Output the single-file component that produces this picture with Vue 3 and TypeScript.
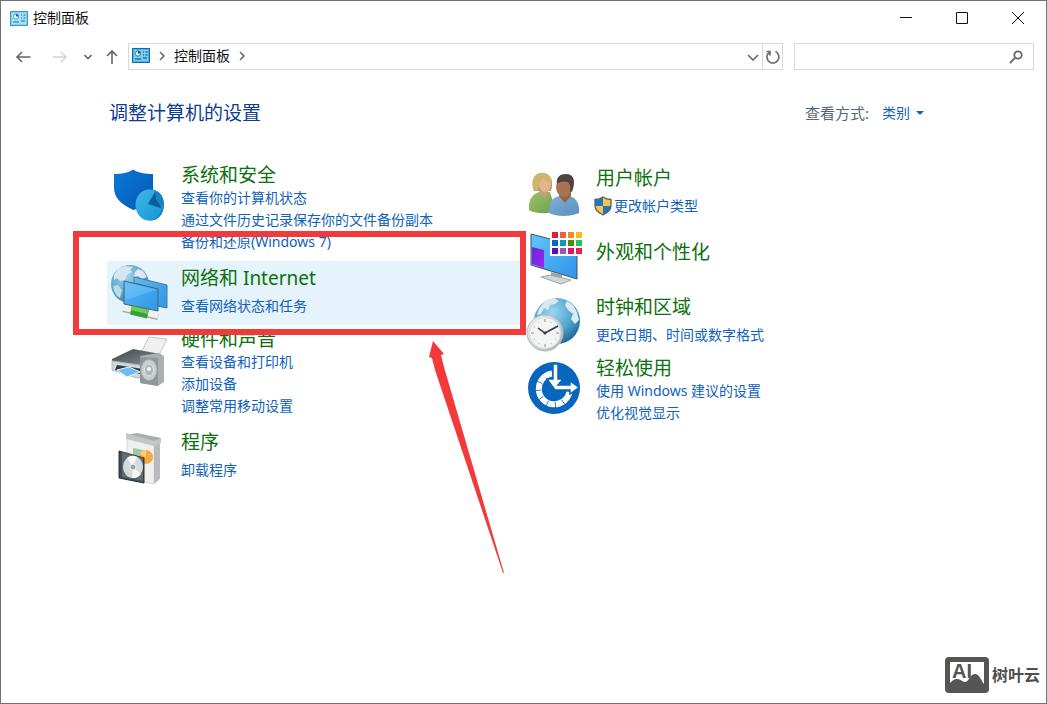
<script setup lang="ts">
import { ref } from 'vue'

interface Category {
  icon: string
  title: string
  links: string[]
  shield?: boolean
  active?: boolean
}

const leftColumn: Category[] = [
  {
    icon: 'security',
    title: '系统和安全',
    links: ['查看你的计算机状态', '通过文件历史记录保存你的文件备份副本', '备份和还原(Windows 7)'],
  },
  { icon: 'network', title: '网络和 Internet', links: ['查看网络状态和任务'], active: true },
  { icon: 'hardware', title: '硬件和声音', links: ['查看设备和打印机', '添加设备', '调整常用移动设置'] },
  { icon: 'programs', title: '程序', links: ['卸载程序'] },
]

const rightColumn: Category[] = [
  { icon: 'users', title: '用户帐户', links: ['更改帐户类型'], shield: true },
  { icon: 'appearance', title: '外观和个性化', links: [] },
  { icon: 'clock', title: '时钟和区域', links: ['更改日期、时间或数字格式'] },
  { icon: 'ease', title: '轻松使用', links: ['使用 Windows 建议的设置', '优化视觉显示'] },
]

const columns = [leftColumn, rightColumn]

const swatches = [
  ['#e3212f', '#f25a4a', '#f58a1f', '#fbb917'],
  ['#0b66c3', '#1495b5', '#4c8c0a', '#22c264'],
  ['#5a12b4', '#8a5fb5', '#d6127f', '#ea1d4f'],
]

const minorTicks = [30, 60, 120, 150, 210, 240, 300, 330]
const majorTicks = [0, 90, 180, 270]
const ringTicks = [145, 175, 205, 235, 265, 295]

const query = ref('')
const view = ref('类别')

function sizeClass(item: Category): string {
  if (item.links.length === 0) return 'bare'
  return item.links.length === 1 ? 'single' : 'multi'
}
</script>

<template>
  <div class="window">
    <header class="titlebar">
      <svg class="panel-icon" viewBox="0 0 18 15" aria-hidden="true">
        <rect x="0.5" y="0.5" width="17" height="14" fill="#7fd0f2" stroke="#3c98c8" />
        <rect x="2" y="2" width="14" height="11" fill="#a9e2f8" />
        <circle cx="6" cy="5.5" r="2.6" fill="#fff" stroke="#4a98c8" />
        <path d="M6 5.5V2.9A2.6 2.6 0 0 1 8.6 5.5Z" fill="#1765a5" />
        <path d="M3 11h6M11 4h1M13.5 4h2M11 7h1M13.5 7h2M11 10h4" stroke="#3d93c8" stroke-width="1.4" />
      </svg>
      <span class="window-title">控制面板</span>
      <div class="window-buttons">
        <button type="button" aria-label="最小化">
          <svg viewBox="0 0 14 14"><path d="M1 6.5h12" /></svg>
        </button>
        <button type="button" aria-label="最大化">
          <svg viewBox="0 0 14 14"><path d="M1.5 1.5h11v11h-11z" /></svg>
        </button>
        <button type="button" aria-label="关闭">
          <svg viewBox="0 0 14 14"><path d="M1 1l12 12M13 1L1 13" /></svg>
        </button>
      </div>
    </header>

    <nav class="toolbar">
      <div class="history">
        <button type="button" class="nav-back" aria-label="后退">
          <svg viewBox="0 0 16 14"><path d="M15.5 7H2M7 2L2 7l5 5" /></svg>
        </button>
        <button type="button" class="nav-forward" aria-label="前进" disabled>
          <svg viewBox="0 0 16 14"><path d="M0.5 7H14M9 2l5 5-5 5" /></svg>
        </button>
        <button type="button" class="nav-recent" aria-label="最近浏览的位置">
          <svg viewBox="0 0 10 14"><path d="M1.5 5L5 8.5 8.5 5" /></svg>
        </button>
        <button type="button" class="nav-up" aria-label="上移">
          <svg viewBox="0 0 14 16"><path d="M7 15V2M2 7l5-5 5 5" /></svg>
        </button>
      </div>
      <div class="address">
        <svg class="panel-icon" viewBox="0 0 18 15" aria-hidden="true">
          <rect x="0.5" y="0.5" width="17" height="14" fill="#46b2e6" stroke="#136ca8" />
          <rect x="2" y="2" width="14" height="11" fill="#7dcdf2" />
          <circle cx="6" cy="5.5" r="2.7" fill="#f2f5d0" stroke="#2f7fba" />
          <path d="M6 5.5V2.9A2.6 2.6 0 0 1 8.6 5.5Z" fill="#114f8c" />
          <path d="M3 11h6M11 4h1M13.5 4h2M11 7h1M13.5 7h2M11 10h4" stroke="#1f72b0" stroke-width="1.4" />
        </svg>
        <svg class="crumb" viewBox="0 0 8 10" aria-hidden="true"><path d="M2 1l4 4-4 4" /></svg>
        <a href="#" class="crumb-text">控制面板</a>
        <svg class="crumb" viewBox="0 0 8 10" aria-hidden="true"><path d="M2 1l4 4-4 4" /></svg>
        <button type="button" class="drop" aria-label="以前的位置">
          <svg viewBox="0 0 12 14"><path d="M1 5l5 5 5-5" /></svg>
        </button>
        <button type="button" class="refresh" aria-label="刷新">
          <svg viewBox="0 0 16 16"><path d="M10.5 2.6A6 6 0 1 1 4 3.5M1.5 2.5H5v4" /></svg>
        </button>
      </div>
      <div class="search">
        <input v-model="query" type="text" aria-label="搜索控制面板" />
        <svg viewBox="0 0 14 14" aria-hidden="true">
          <circle cx="9" cy="5" r="3.7" />
          <path d="M6.3 7.7L1 13" />
        </svg>
      </div>
    </nav>

    <main class="content">
      <div class="heading">
        <h1>调整计算机的设置</h1>
        <div class="view-by">
          <label for="view-mode">查看方式:</label>
          <select id="view-mode" v-model="view">
            <option>类别</option>
          </select>
          <svg viewBox="0 0 8 4" aria-hidden="true"><path d="M0 0h8L4 4z" fill="#1464b4" /></svg>
        </div>
      </div>

      <div class="columns">
        <div v-for="(column, index) in columns" :key="index" class="column">
          <section
            v-for="item in column"
            :key="item.icon"
            class="category"
            :class="[sizeClass(item), { active: item.active }]"
          >
            <svg v-if="item.icon === 'security'" class="category-icon" viewBox="0 0 74 64" aria-hidden="true">
              <defs>
                <linearGradient id="shield-fill" x1="0" y1="0" x2="1" y2="1">
                  <stop offset="0" stop-color="#0b78d6" />
                  <stop offset="1" stop-color="#0459b4" />
                </linearGradient>
                <linearGradient id="pie-fill" x1="0" y1="0" x2="1" y2="1">
                  <stop offset="0" stop-color="#3fb9ec" />
                  <stop offset="1" stop-color="#1694d2" />
                </linearGradient>
              </defs>
              <path d="M7 13C14 13 21 12 26 8.5C32 12 38 13 46 13V28C46 38 37 46 26.5 49C15 44 7 37 7 27Z" fill="url(#shield-fill)" />
              <ellipse cx="44" cy="44" rx="13" ry="15.5" fill="#127fbd" />
              <ellipse cx="42" cy="44" rx="13.5" ry="15.5" fill="url(#pie-fill)" />
              <path d="M56 47C58 38 54 31 48 29.5L47 33L53 46Z" fill="#2aa0dc" />
              <path d="M48.5 30L41 43L55 47.5L49 37Z" fill="#075f9b" />
              <path d="M49 30C55 33 57.5 39 56.5 47L49 39Z" fill="#1a80c0" />
            </svg>

            <svg v-else-if="item.icon === 'network'" class="category-icon" viewBox="0 0 74 64" aria-hidden="true">
              <defs>
                <radialGradient id="net-globe" cx="0.4" cy="0.3" r="0.75">
                  <stop offset="0" stop-color="#9bd4ee" />
                  <stop offset="0.6" stop-color="#5ba9d0" />
                  <stop offset="1" stop-color="#3580ac" />
                </radialGradient>
                <linearGradient id="net-screen" x1="0" y1="0" x2="1" y2="1">
                  <stop offset="0" stop-color="#5cbcf8" />
                  <stop offset="0.5" stop-color="#43a6ef" />
                  <stop offset="1" stop-color="#2f97e8" />
                </linearGradient>
              </defs>
              <circle cx="23" cy="23" r="19" fill="url(#net-globe)" />
              <path d="M7 14L11 8L18 5L26 6L23 9L25 11L20 14L18 19L13 20L10 17L7 19Z" fill="#d6e7ef" />
              <path d="M31 8L36 10L40 16L35 18L31 15L27 16L28 11Z" fill="#dfebf0" />
              <path d="M6 25L11 24L15 29L13 37L10 35L7 30Z" fill="#bcd9e6" />
              <path d="M27 16L60 24V47L50 45V28L27 22Z" fill="url(#net-screen)" stroke="#5a7888" />
              <path d="M17 20L51 28V50L17 43Z" fill="url(#net-screen)" stroke="#48656f" />
              <path d="M18 21L50 28.5L18 39Z" fill="#75c9fa" opacity="0.45" />
              <path d="M16 48L51 56" stroke="#a8aca8" stroke-width="6" />
              <path d="M16 47L51 55" stroke="#f0f1ed" stroke-width="5" />
              <path d="M24 49L41 53" stroke="#35a03b" stroke-width="9" />
              <path d="M24 47L41 51" stroke="#6dce5c" stroke-width="4" />
            </svg>

            <svg v-else-if="item.icon === 'hardware'" class="category-icon" viewBox="0 0 74 64" aria-hidden="true">
              <defs>
                <linearGradient id="printer-top" x1="0" y1="0" x2="1" y2="1">
                  <stop offset="0" stop-color="#3f4649" />
                  <stop offset="0.6" stop-color="#6f7679" />
                  <stop offset="1" stop-color="#aab0b2" />
                </linearGradient>
              </defs>
              <path d="M33 30L42 12L60 14L50 34Z" fill="#eff0f0" stroke="#c3c6c7" />
              <path d="M5 34L26 24L54 29L39 42L5 37Z" fill="url(#printer-top)" />
              <path d="M5 36L39 41V53L30 53L5 45Z" fill="#d3d7d9" stroke="#b4b8ba" />
              <path d="M10 40L36 44L33 49L8 45Z" fill="#293d4b" />
              <path d="M10 45L22 42L33 47L20 52Z" fill="#6ebced" stroke="#eef5f8" />
              <path d="M33 31L52 28L57 31V57L51 61L33 58Z" fill="#a9b0b4" />
              <path d="M33 32L51 33V61L33 58Z" fill="#8f979b" />
              <ellipse cx="42" cy="45" rx="8" ry="10.5" fill="#c9ced0" stroke="#a4abae" />
              <ellipse cx="42" cy="45" rx="4.5" ry="6" fill="#b0b7bb" stroke="#e1e4e5" />
              <circle cx="42" cy="44" r="2" fill="#f2f4f4" />
            </svg>

            <svg v-else-if="item.icon === 'programs'" class="category-icon" viewBox="0 0 74 64" aria-hidden="true">
              <path d="M19 10L30 8L54 13V17L47 19L19 13Z" fill="#a9acad" />
              <path d="M20 12L47 18V59L20 53Z" fill="#f0f1ef" stroke="#d5d7d7" />
              <path d="M47 18L53 14V54L47 59Z" fill="#b8bbbc" />
              <path d="M19 8L47 16L54 13V18L47 21L19 14Z" fill="#c4c6c7" />
              <path d="M26 23L36 25V39L26 37Z" fill="#99c9a8" />
              <circle cx="39" cy="32" r="7" fill="#f3ab42" />
              <path d="M39 32L39 25A7 7 0 0 0 33 29Z" fill="#ffcf78" />
              <path d="M12 26L37 33V58L12 53Z" fill="#414d53" stroke="#293338" />
              <path d="M15 27L36 33V56L15 52Z" fill="#5e6b70" />
              <ellipse cx="26" cy="42" rx="10" ry="11" fill="#d5dbdd" />
              <path d="M26 42L20 33A10 11 0 0 1 30 32ZM26 42L34 49A10 11 0 0 1 25 53Z" fill="#f7f8f8" />
              <circle cx="26" cy="42" r="3" fill="#98a6ac" stroke="#edf0f1" />
            </svg>

            <svg v-else-if="item.icon === 'users'" class="category-icon" viewBox="0 0 74 64" aria-hidden="true">
              <defs>
                <linearGradient id="green-shirt" x1="0" y1="0" x2="1" y2="1">
                  <stop offset="0" stop-color="#9bc36b" />
                  <stop offset="1" stop-color="#6da04a" />
                </linearGradient>
                <linearGradient id="blue-shirt" x1="0" y1="0" x2="1" y2="1">
                  <stop offset="0" stop-color="#7fb0d8" />
                  <stop offset="1" stop-color="#5a8fc0" />
                </linearGradient>
              </defs>
              <path d="M12 30C9 21 11 12 20 12C29 12 32 20 29 30Z" fill="#b99d55" />
              <path d="M7 49C6 37 12 32 18 31H28L34 50C26 53 13 53 7 49Z" fill="url(#green-shirt)" />
              <path d="M18 27H26V32L23 37L17 31Z" fill="#cf9b74" />
              <ellipse cx="23" cy="23" rx="6" ry="8" fill="#e2b592" />
              <path d="M11 28C9 18 13 12 20 12C26 12 30 16 30 21C25 21 22 19 21 16C20 20 16 21 16 30Z" fill="#cdb66c" />
              <path d="M27 52C26 41 31 36 38 35H47C54 36 58 43 57 52C48 56 35 56 27 52Z" fill="url(#blue-shirt)" />
              <path d="M38 30H49V35L43 42L37 35Z" fill="#99653f" />
              <ellipse cx="42" cy="26" rx="8" ry="10" fill="#a87350" />
              <path d="M35 23C34 16 38 13 44 13C52 13 54 20 50 31L48 30C49 26 48 23 46 21C42 21 38 20 35 23Z" fill="#51443d" />
            </svg>

            <svg v-else-if="item.icon === 'appearance'" class="category-icon" viewBox="0 0 74 64" aria-hidden="true">
              <defs>
                <linearGradient id="monitor-fill" x1="0" y1="0" x2="1" y2="1">
                  <stop offset="0" stop-color="#62c5fb" />
                  <stop offset="1" stop-color="#2f93ea" />
                </linearGradient>
                <linearGradient id="monitor-accent" x1="0" y1="0" x2="1" y2="1">
                  <stop offset="0" stop-color="#6127dc" />
                  <stop offset="1" stop-color="#a125ee" />
                </linearGradient>
              </defs>
              <path d="M29 47L40 50V56L29 53Z" fill="#a0a4a6" />
              <path d="M19 52L28 50L49 55L39 59Z" fill="#d3d6d7" stroke="#9da4a7" />
              <path d="M9 9L55 21V54L9 40Z" fill="url(#monitor-fill)" stroke="#45545c" />
              <path d="M10 22L22 25V43L10 39Z" fill="url(#monitor-accent)" />
              <rect x="28" y="5" width="34" height="26" fill="#fff" />
              <g v-for="(row, r) in swatches" :key="r">
                <rect v-for="(color, c) in row" :key="color" :x="30 + c * 8" :y="7 + r * 8" width="6" height="6" :fill="color" />
              </g>
            </svg>

            <svg v-else-if="item.icon === 'clock'" class="category-icon" viewBox="0 0 74 64" aria-hidden="true">
              <defs>
                <radialGradient id="clock-globe" cx="0.4" cy="0.3" r="0.75">
                  <stop offset="0" stop-color="#9bd7f0" />
                  <stop offset="0.6" stop-color="#4ca3ce" />
                  <stop offset="1" stop-color="#1a6290" />
                </radialGradient>
                <linearGradient id="clock-rim" x1="0" y1="0" x2="1" y2="1">
                  <stop offset="0" stop-color="#f4f4f4" />
                  <stop offset="1" stop-color="#a9afb2" />
                </linearGradient>
              </defs>
              <circle cx="35" cy="31" r="23" fill="url(#clock-globe)" />
              <path d="M17 19L23 11L32 8L37 11L33 14L28 15L26 20L22 18L19 24L15 25Z" fill="#d8e9f0" />
              <path d="M45 11L51 15L55 22L57 30L53 34L49 29L51 24L46 20L43 15Z" fill="#dcebf1" />
              <circle cx="23" cy="43" r="18" fill="url(#clock-rim)" stroke="#b9bdbf" />
              <circle cx="23" cy="43" r="15.5" fill="#f3f4f4" stroke="#dcdfe0" />
              <path
                v-for="tick in minorTicks"
                :key="tick"
                d="M23 30V31.5"
                stroke="#c2c6c8"
                :transform="`rotate(${tick} 23 43)`"
              />
              <path
                v-for="tick in majorTicks"
                :key="tick"
                d="M23 29V32"
                stroke="#8b9093"
                :transform="`rotate(${tick} 23 43)`"
              />
              <path d="M16 38L23 43L36 36" fill="none" stroke="#363a3d" stroke-width="1.5" />
              <circle cx="23" cy="43" r="1.5" fill="#363a3d" />
            </svg>

            <svg v-else class="category-icon" viewBox="0 0 74 64" aria-hidden="true">
              <circle cx="32" cy="34" r="26" fill="#0867bd" />
              <path d="M30 19.5A15.5 15.5 0 1 0 47.5 38" fill="none" stroke="#fff" stroke-width="6" />
              <path
                v-for="tick in ringTicks"
                :key="tick"
                d="M32 16V22"
                stroke="#0867bd"
                stroke-width="0.8"
                :transform="`rotate(${tick} 32 35)`"
              />
              <path
                d="M31 10h5v15h5l-5 6h12v-4l9 6.5-9 6.5v-4H33l-8-11h6z"
                fill="#fff"
                stroke="#0867bd"
                stroke-width="1.5"
              />
            </svg>

            <div class="category-body">
              <h2><a href="#">{{ item.title }}</a></h2>
              <ul v-if="item.links.length">
                <li v-for="link in item.links" :key="link">
                  <svg v-if="item.shield" class="uac" viewBox="0 0 18 20" aria-hidden="true">
                    <path d="M9 1C6.5 3 4 3.5 1 3.5V10H9Z" fill="#1d77c6" />
                    <path d="M9 1C11.5 3 14 3.5 17 3.5V10H9Z" fill="#f7c742" />
                    <path d="M1 10H9V19C4 16.5 1 14 1 10Z" fill="#f7c742" />
                    <path d="M17 10H9V19C14 16.5 17 14 17 10Z" fill="#1d77c6" />
                    <path d="M9 1C6.5 3 4 3.5 1 3.5V10C1 14 4 16.5 9 19C14 16.5 17 14 17 10V3.5C14 3.5 11.5 3 9 1Z" fill="none" stroke="#56616b" stroke-width="1.3" />
                  </svg>
                  <a href="#">{{ link }}</a>
                </li>
              </ul>
            </div>
          </section>
        </div>
      </div>
    </main>

    <svg class="annotation" viewBox="0 0 453 344" aria-hidden="true">
      <rect x="3" y="3" width="447" height="98" fill="none" stroke="#f23a3a" stroke-width="6" />
      <path d="M360 110L371 123L368 124L371 136L431 342L430 342L362 139L359 127L356 126Z" fill="#f23a3a" />
    </svg>

    <div class="brand">
      <svg viewBox="0 0 44 36" aria-hidden="true">
        <rect width="44" height="36" rx="4" fill="#555" />
        <path d="M5 5h34v22c-3-4-5-10-9-10-5 0-6 8-10 8-3 0-4-3-8-3-3 0-5 2-7 4z" fill="#fff" />
        <text x="7" y="21" class="brand-mark">AI</text>
      </svg>
      <span>树叶云</span>
    </div>
  </div>
</template>

<style>
body {
  background: #fff;
}
</style>

<style scoped>
.window {
  position: relative;
  box-sizing: border-box;
  min-height: 100vh;
  border: 1px solid #737173;
  background: #fff;
  color: #111;
  font-family: 'Noto Sans', 'Noto Sans CJK SC', sans-serif;
  font-size: 14px;
  line-height: 22px;
}

button {
  display: flex;
  align-items: center;
  justify-content: center;
  padding: 0;
  border: 0;
  background: none;
}

svg {
  flex: none;
}

a {
  text-decoration: none;
}

.titlebar {
  display: flex;
  align-items: center;
  height: 34px;
  padding-left: 9px;
}

.panel-icon {
  width: 18px;
  height: 15px;
}

.window-title {
  margin-left: 5px;
}

.window-buttons {
  display: flex;
  margin-left: auto;
}

.window-buttons button {
  width: 56px;
  height: 34px;
}

.window-buttons svg {
  width: 14px;
  height: 14px;
  fill: none;
  stroke: #111;
}

.toolbar {
  display: flex;
  align-items: center;
  gap: 9px;
  margin-top: 8px;
  padding-right: 12px;
}

.history {
  display: flex;
  align-items: center;
  gap: 12px;
  width: 118px;
  padding-left: 14px;
  box-sizing: border-box;
}

.history svg {
  display: block;
  height: 14px;
  fill: none;
  stroke: #666;
  stroke-width: 1.6;
}

.nav-back svg,
.nav-forward svg {
  width: 16px;
}

.nav-forward {
  margin-left: 9px;
}

.nav-forward svg {
  stroke: #d4d4d4;
}

.nav-recent {
  margin-left: 3px;
}

.nav-recent svg {
  width: 10px;
}

.nav-up svg {
  width: 14px;
  height: 16px;
}

.address,
.search {
  display: flex;
  align-items: center;
  box-sizing: border-box;
  height: 27px;
  border: 1px solid #d9d9d9;
}

.address {
  flex: 1;
  padding: 0 0 2px 3px;
}

.crumb {
  width: 8px;
  height: 10px;
  margin: 0 8px;
  fill: none;
  stroke: #666;
  stroke-width: 1.5;
}

.crumb-text {
  color: #111;
}

.drop,
.refresh {
  align-self: flex-start;
  height: 25px;
}

.drop {
  width: 18px;
  margin-left: auto;
}

.refresh {
  width: 20px;
  border-left: 1px solid #d9d9d9;
}

.drop svg {
  width: 12px;
  height: 14px;
}

.refresh svg {
  width: 16px;
  height: 16px;
}

.drop svg,
.refresh svg {
  fill: none;
  stroke: #707070;
  stroke-width: 1.7;
}

.search {
  width: 240px;
  margin-left: 2px;
  padding-right: 10px;
}

.search input {
  flex: 1;
  min-width: 0;
  border: 0;
  outline: 0;
  font: inherit;
}

.search svg {
  width: 14px;
  height: 14px;
  fill: none;
  stroke: #666;
  stroke-width: 1.8;
}

.content {
  padding: 31px 122px 0 106px;
}

.heading {
  display: flex;
  align-items: center;
  justify-content: space-between;
  height: 24px;
  padding-left: 2px;
}

h1,
h2 {
  margin: 0;
  font-size: 19px;
  font-weight: 400;
  line-height: 24px;
}

h1 {
  color: #0f3c94;
}

.view-by {
  display: flex;
  align-items: center;
}

.view-by label {
  margin-right: 13px;
  color: #56667a;
  font-size: 15px;
}

.view-by select {
  appearance: none;
  margin: 0 6px 0 0;
  padding: 0;
  border: 0;
  background: none;
  color: #0f62bd;
  font: inherit;
}

.view-by svg {
  width: 8px;
  height: 4px;
}

.columns {
  display: grid;
  grid-template-columns: minmax(0, 413px) minmax(0, 1fr);
  column-gap: 2px;
  margin-top: 36px;
}

.category {
  display: flex;
}

.category-icon {
  width: 74px;
  height: 64px;
  overflow: visible;
}

.category-body {
  white-space: nowrap;
}

.single .category-body {
  padding: 5px 0 8px;
}

.single ul {
  margin-top: 5px;
}

.multi .category-body {
  padding: 2px 0 8px;
}

.bare .category-body {
  padding: 15px 0 26px;
}

.active {
  background: #e5f3fd;
}

h2 a {
  color: #0c700c;
}

ul {
  margin: 0;
  padding: 0;
  list-style: none;
}

li {
  display: flex;
  align-items: center;
  height: 22px;
}

li a {
  color: #0f62bd;
}

.uac {
  width: 18px;
  height: 20px;
  margin: 0 2px 0 -2px;
}

.annotation {
  position: absolute;
  top: 230px;
  left: 72px;
  width: 453px;
  height: 344px;
  pointer-events: none;
}

.brand {
  position: absolute;
  right: 6px;
  bottom: 10px;
  display: flex;
  align-items: center;
  gap: 3px;
  color: #4f4f4f;
  font-size: 16px;
  font-weight: 700;
}

.brand svg {
  width: 44px;
  height: 36px;
}

.brand-mark {
  fill: #555;
  font-family: 'Liberation Sans', sans-serif;
  font-size: 20px;
  font-weight: 700;
}
</style>
